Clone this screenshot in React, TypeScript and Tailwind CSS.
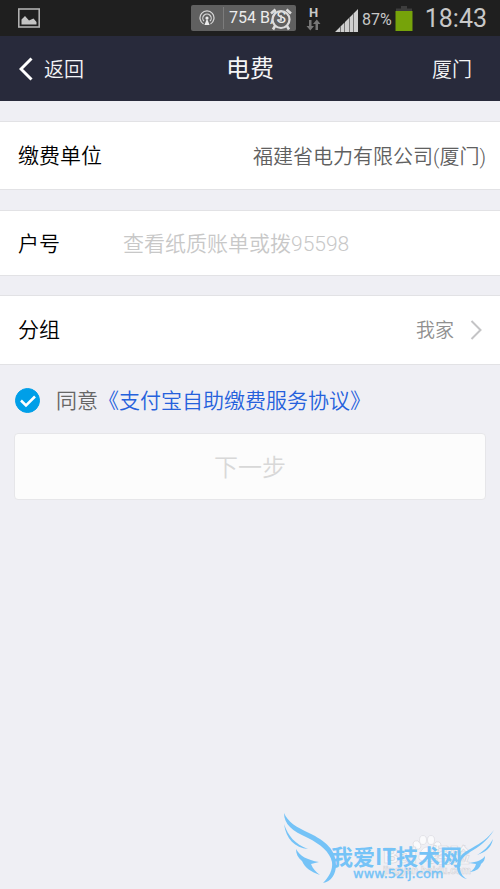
import { useState } from 'react'

function StatusBar() {
  return (
    <div className="flex h-9 items-center bg-[#1f1f1f] pl-[18px] pr-[13px] text-[#c8c8c8]">
      <svg className="mr-auto h-5 w-[22px]" viewBox="0 0 22 20" fill="none">
        <rect x="0.8" y="1" width="20.4" height="18" stroke="#b0b0b0" strokeWidth="1.6" />
        <path d="M3.5 16.5v-5L7 8l4 4.500 4.500-2L18.500 14v2.500z" fill="#c4c4c4" />
      </svg>

      <div className="relative mr-2.5 flex h-[26px] w-[105px] items-center rounded-xs bg-[#606060] text-[#ececec]">
        <svg className="mx-2 size-4" viewBox="0 0 16 16" fill="none" stroke="#d8d8d8" strokeWidth="1.2">
          <path d="M4.500 14A7 7 0 1 1 11.500 14" />
          <path d="M5 11.200A4.200 4.200 0 1 1 11 11.200" />
          <circle cx="8" cy="8" r="1.600" fill="#ececec" stroke="none" />
          <path d="M8 8.500l2.600 6.500H5.400z" fill="#ececec" stroke="none" />
        </svg>
        <span className="h-[22px] border-l border-[#7c7c7c]" />
        <span className="pl-[5px] text-base whitespace-nowrap">754 B/S</span>
        <svg className="absolute right-[3px] top-[2px] h-6 w-6" viewBox="0 0 24 24" fill="none" stroke="#dcdcdc">
          <circle cx="12" cy="12.500" r="8.500" strokeWidth="2.200" />
          <path d="M2 6.500 6.500 2.500M22 6.500 17.500 2.500M6 19l-2 3.500M18 19l2 3.500" strokeWidth="2.600" />
          <path d="M12 8v5h-3.500" strokeWidth="1.600" />
        </svg>
      </div>

      <div className="mr-3.5 flex w-[15px] flex-col items-center">
        <span className="text-[13px] leading-[13px] font-bold">H</span>
        <svg className="h-3 w-[15px]" viewBox="0 0 15 12" fill="#777777">
          <path d="M3 1h2.500v6H8l-3.700 4.500L.5 7H3z" />
          <path d="M9.500 11H12V5h2.500L10.800.5 7 5h2.500z" />
        </svg>
      </div>

      <svg className="mr-1 mt-1 h-[23px] w-[23px]" viewBox="0 0 23 23" fill="#cfcfcf">
        <path d="M0 23l5-5v5zM5.500 23v-5.500l4-4V23zM10 23V13l4-4v14zM14.500 23V8.500l3.500-3.500v18zM18.500 23V4.500L23 0v23z" />
      </svg>
      <span className="mr-[3px] pt-[3px] text-base">87%</span>
      <svg className="mr-3 h-[26px] w-[18px]" viewBox="0 0 18 26">
        <path d="M6 1h6v2.500h5V7H1V3.500h5z" fill="#3d3d3d" />
        <path d="M.5 6h17v20H.5z" fill="#76a30a" />
      </svg>
      <span className="text-[25px] leading-none">18:43</span>
    </div>
  )
}

function Watermark() {
  return (
    <div className="pointer-events-none absolute right-0 bottom-0">
      <svg className="h-[89px] w-[230px]" viewBox="0 0 230 89">
        <g fill="#fafafc" stroke="#dedee3" strokeWidth="0.800">
          <ellipse cx="147" cy="45" rx="3.500" ry="4.500" transform="rotate(-25 147 45)" />
          <ellipse cx="153" cy="40" rx="3.500" ry="4.500" />
          <ellipse cx="161" cy="40" rx="3.500" ry="4.500" />
          <ellipse cx="167" cy="46" rx="3.500" ry="4.500" transform="rotate(25 167 46)" />
          <path d="M157 47c5 0 9 8 8 12-1 3-14 3-16 0-1-4 3-12 8-12z" />
        </g>
        <g fill="#f7f7fa" stroke="#d4d4d9" strokeWidth="0.600" className="font-['Liberation_Sans','Noto_Sans_CJK_SC',sans-serif] font-bold">
          <text x="113" y="63" fontSize="22">Bai</text>
          <text x="160" y="63" fontSize="20">经验</text>
          <text x="113" y="74" fontSize="10">jingyan.baidu.com</text>
        </g>
        <g fill="#75c3f7">
          <path d="M14 13c4 9 12 14 25 20 17 8 27 17 27 32 0 9-5 17-13 18 6-6 10-13 9-21-2-10-12-18-24-24C22 31 14 24 14 13z" />
          <path d="M14 24c4 12 11 20 24 25-13-1-22-10-24-25z" />
          <path d="M26 49c4 7 11 11 23 13l-8 2c2 5 5 8 9 11-9-3-15-7-18-14-4-3-6-7-6-12z" />
          <path d="M224 30c-7 11-15 17-24 22-8 5-11 10-10 17 1 5 3 8 7 10-6-1-10-6-10-12 0-9 5-14 15-19 9-5 16-10 22-18z" />
          <path d="M223 39c-2 9-7 13-16 16 7-4 12-9 16-16z" />
          <path d="M215 56c-3 4-8 6-16 7l7 1c-1 4-3 6-6 8 7-1 10-4 11-8 3-2 4-5 4-8z" />
          <text x="61" y="65" fontSize="22" className="font-['Noto_Sans_CJK_SC',sans-serif] font-bold">我爱IT技术网</text>
          <text x="83" y="78" fontSize="13" stroke="#75c3f7" strokeWidth="0.400" className="font-['DejaVu_Sans',sans-serif]">www.52ij.com</text>
        </g>
      </svg>
    </div>
  )
}

export default function App() {
  const [account, setAccount] = useState('')
  const [agreed, setAgreed] = useState(true)

  return (
    <div className="relative flex min-h-screen flex-col bg-[#efeff4] font-[Roboto,'Noto_Sans_CJK_SC',sans-serif]">
      <StatusBar />

      <header className="grid h-[65px] grid-cols-3 items-center bg-[#282a3b] text-xl font-[350] text-[#f4f4f6]">
        <button type="button" className="flex items-center gap-[11px] justify-self-start pl-[19px]">
          <svg className="h-6 w-3.5" viewBox="0 0 14 24" fill="none" stroke="#ffffff" strokeWidth="3">
            <path d="M12.500 1.500 2 12l10.500 10.500" />
          </svg>
          <span className="pt-0.5">返回</span>
        </button>
        <h1 className="text-center text-2xl font-normal">电费</h1>
        <button type="button" className="justify-self-end pt-0.5 pr-7">厦门</button>
      </header>

      <form className="flex flex-col font-[350]" onSubmit={(e) => e.preventDefault()}>
        <div className="mt-5 flex h-[69px] items-center justify-between border-y border-[#e2e2e5] bg-white pt-[3px] pl-[18px] pr-3.5">
          <span className="text-[21px] text-black">缴费单位</span>
          <span className="text-xl text-[#606060]">福建省电力有限公司(厦门)</span>
        </div>

        <div className="mt-5 flex h-[66px] items-center border-y border-[#e2e2e5] bg-white px-[18px] pt-[3px] text-[21px]">
          <label htmlFor="account" className="w-[105px] text-black">户号</label>
          <input
            id="account"
            type="text"
            value={account}
            onChange={(e) => setAccount(e.target.value)}
            placeholder="查看纸质账单或拨95598"
            className="min-w-0 flex-1 bg-transparent outline-none placeholder:text-[#c8c8c8]"
          />
        </div>

        <button type="button" className="mt-[19px] flex h-[70px] items-center border-y border-[#e2e2e5] bg-white pl-[18px] pr-[18px]">
          <span className="mr-auto pt-0.5 text-[21px] text-black">分组</span>
          <span className="mr-4 pt-0.5 text-[19px] text-[#909090]">我家</span>
          <svg className="h-5 w-3" viewBox="0 0 12 20" fill="none" stroke="#c4c4c6" strokeWidth="2">
            <path d="M1.500 1 10.500 10l-9 9" />
          </svg>
        </button>

        <div className="mt-[18px] flex items-center pl-[15px] text-[21px] leading-8">
          <span className="relative mr-4 size-[25px]">
            <input
              id="agree"
              type="checkbox"
              checked={agreed}
              onChange={(e) => setAgreed(e.target.checked)}
              className="peer block size-full appearance-none rounded-full border border-[#c4c4c6] checked:border-[#009fe8] checked:bg-[#009fe8]"
            />
            <svg className="pointer-events-none absolute inset-0 hidden size-full peer-checked:block" viewBox="0 0 25 25" fill="none" stroke="#ffffff" strokeWidth="2.500">
              <path d="M6 12.500l5 5 9-9" />
            </svg>
          </span>
          <label htmlFor="agree" className="pt-0.5 text-[#666666]">同意</label>
          <a href="#agreement" className="pt-0.5 text-[#2561dc]">《支付宝自助缴费服务协议》</a>
        </div>

        <button
          type="submit"
          disabled
          className="mx-3.5 mt-4 h-[67px] rounded-sm border border-[#e6e6e9] bg-[#fcfcfc] pt-0.5 text-2xl text-[#d8d8d8]"
        >
          下一步
        </button>
      </form>

      <Watermark />
    </div>
  )
}
